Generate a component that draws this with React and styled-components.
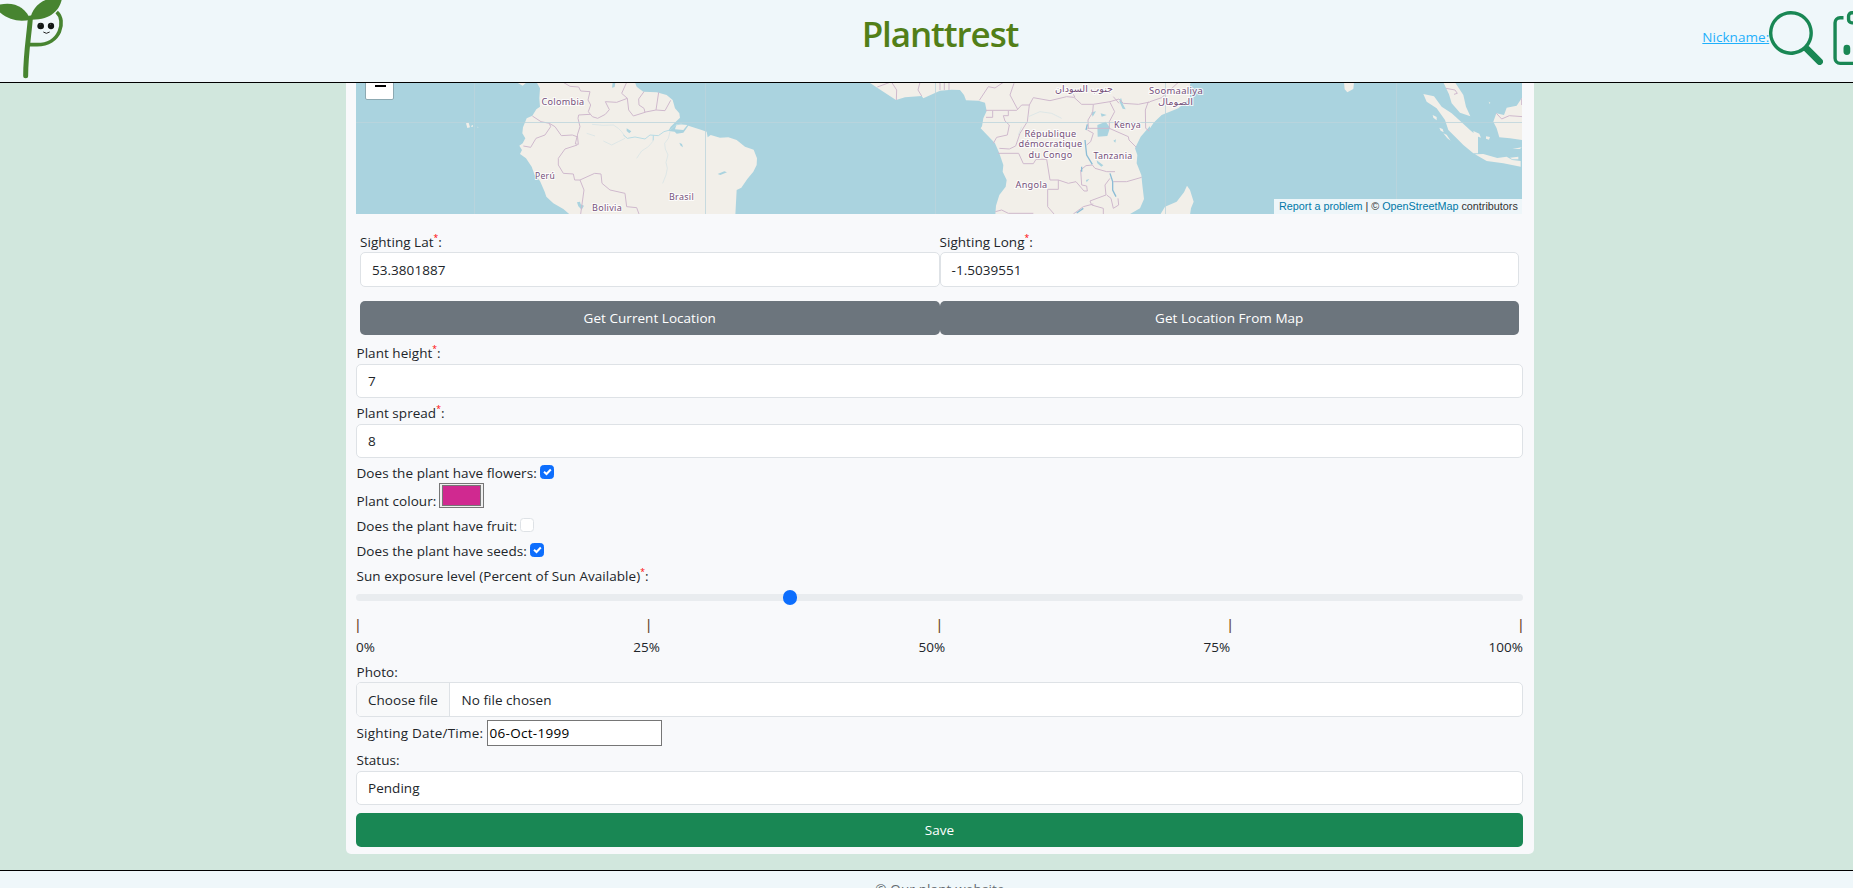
import React from "react";
import styled, { createGlobalStyle } from "styled-components";

const GlobalStyle = createGlobalStyle`
  * { box-sizing: border-box; }
  body {
    margin: 0;
    overflow: hidden;
    background: #d1e7dd;
    color: #212529;
    font-family: "Open Sans", "Noto Sans", sans-serif;
    font-size: 13.5px;
    line-height: 22px;
    letter-spacing: 0.04px;
  }
`;

const Page = styled.div`
  display: flex;
  flex-direction: column;
  width: 1880px;
  height: 888px;
  overflow: hidden;
`;

const Header = styled.header`
  display: grid;
  grid-template-columns: minmax(0, 1fr) auto minmax(0, 1fr);
  flex: none;
  height: 83px;
  background: #eff7fa;
  border-bottom: 1px solid #000;
`;

const Title = styled.h1`
  margin: 0;
  padding-top: 10px;
  font-size: 35px;
  line-height: 48px;
  font-weight: 600;
  letter-spacing: -1.1px;
  color: #527f18;
`;

const Tools = styled.nav`
  display: flex;
  align-items: flex-start;
  padding: 11px 0 0 684px;
  width: 0;
`;

const Nickname = styled.a`
  flex: none;
  width: 67px;
  padding-top: 15px;
  color: #1fb0fb;
  text-decoration: underline;
  white-space: nowrap;
`;

const ToolIcon = styled.svg`
  flex: none;
  width: 54px;
  height: 54px;
  margin-right: 7px;
  fill: #198754;
`;

const Main = styled.main`
  flex: none;
  padding: 0 346px 16px;
`;

const Card = styled.form`
  display: flex;
  flex-direction: column;
  height: 771px;
  padding: 0 11px 7px 10px;
  background: #f8f9fb;
  border-radius: 0 0 5px 5px;
`;

const MapFrame = styled.div`
  position: relative;
  flex: none;
  width: 1166px;
  height: 131px;
  margin-bottom: 17px;
  overflow: hidden;
  background: #aad3df;
`;

const ZoomOut = styled.div`
  position: absolute;
  left: 9px;
  top: -12px;
  width: 29px;
  height: 29px;
  display: flex;
  justify-content: center;
  padding-top: 13px;
  background: #fff;
  border: 1px solid #8ca9b2;
  border-radius: 2px;
`;

const Minus = styled.span`
  width: 11px;
  height: 2px;
  margin-left: 2px;
  background: #000;
`;

const Attribution = styled.div`
  position: absolute;
  right: 0;
  bottom: 0;
  width: 248px;
  height: 15px;
  padding-left: 5px;
  background: rgba(255, 255, 255, 0.8);
  font: 10.8px/15px "Liberation Sans", Arial, sans-serif;
  letter-spacing: 0;
  color: #333;
  white-space: nowrap;
`;

const MapLink = styled.a`
  color: #0078a8;
`;

const Pair = styled.div`
  display: grid;
  grid-template-columns: 1fr 1fr;
  flex: none;
  margin: 0 4px ${(p) => p.$after}px;
`;

const Label = styled.label`
  display: block;
  flex: none;
  height: ${(p) => p.$h || 22}px;
  line-height: ${(p) => (p.$h ? p.$h + 1 : 22)}px;
  margin-top: ${(p) => p.$before || 0}px;
  padding-left: ${(p) => (p.$flush ? 0 : 0.5)}px;
  white-space: nowrap;
`;

const Star = styled.sup`
  color: red;
  font-size: 8.5px;
  line-height: 0;
  vertical-align: 6.5px;
`;

const Field = styled.div`
  display: flex;
  flex: none;
  align-items: center;
  height: ${(p) => p.$h || 34}px;
  padding: 0 11px;
  overflow: hidden;
  background: #fff;
  border: 1px solid #dee2e6;
  border-radius: 5px;
`;

const ChooseFile = styled.span`
  display: flex;
  align-items: center;
  width: 93px;
  height: 100%;
  margin-left: -11px;
  margin-right: 11.5px;
  padding-left: 11px;
  background: #f8f9fa;
  border-right: 1px solid #dee2e6;
`;

const Button = styled.button`
  flex: none;
  height: 34px;
  margin-top: ${(p) => p.$before || 0}px;
  padding: 0;
  border: 0;
  border-radius: 5px;
  background: ${(p) => (p.$primary ? "#198754" : "#6c757d")};
  color: #fff;
  font: inherit;
  letter-spacing: inherit;
`;

const Line = styled.div`
  display: flex;
  flex: none;
  align-items: flex-start;
  height: ${(p) => p.$h || 22}px;
  margin-top: ${(p) => p.$before || 3}px;
`;

const Caption = styled.span`
  flex: none;
  width: ${(p) => p.$w}px;
  padding-top: ${(p) => p.$drop || 0}px;
  padding-left: 0.5px;
  letter-spacing: ${(p) => p.$spacing || 0.06}px;
  white-space: nowrap;
`;

const Check = styled.span`
  display: flex;
  align-items: center;
  justify-content: center;
  width: 14.4px;
  height: 14.4px;
  margin-top: 3px;
  border-radius: 3.5px;
  border: 1px solid ${(p) => (p.$on ? "#0d6efd" : "#dee2e6")};
  background: ${(p) => (p.$on ? "#0d6efd" : "#fff")};
`;

const Swatch = styled.span`
  width: 45px;
  height: 25px;
  padding: 1px 2px;
  border: 1px solid #767676;
  background: #efefef;
  display: flex;
`;

const SwatchColour = styled.span`
  flex: 1;
  background: #d02990;
  border: 1px solid #777;
`;

const Track = styled.div`
  display: flex;
  align-items: center;
  flex: none;
  height: 7px;
  margin-top: 7px;
  padding-left: 426.5px;
  background: #e9ecef;
  border-radius: 4px;
`;

const Thumb = styled.span`
  flex: none;
  width: 14.4px;
  height: 14.4px;
  border-radius: 50%;
  background: #0d6efd;
`;

const Scale = styled.div`
  display: flex;
  flex: none;
  justify-content: space-between;
  height: ${(p) => p.$h}px;
  line-height: ${(p) => p.$h}px;
  margin-top: ${(p) => p.$before}px;
  padding: 0 ${(p) => p.$inset || 0}px;
`;

const Tick = styled.span`
  width: 3px;
  display: flex;
  justify-content: center;
  font-family: "Liberation Sans", Arial, sans-serif;
  font-size: 14.5px;
  color: #6b4a2c;
`;

const DateField = styled.span`
  width: 175px;
  height: 26px;
  padding-left: 1.5px;
  line-height: 24px;
  letter-spacing: 0.3px;
  border: 1px solid #767676;
  background: #fff;
  color: #000;
`;

const Footer = styled.footer`
  flex: 1;
  padding-top: 7px;
  border-top: 1px solid #000;
  background: #eff7fa;
  color: #62696e;
  text-align: center;
  letter-spacing: 0.13px;
`;

const Logo = () => (
  <svg width="100" height="82" viewBox="0 0 300 246" fill="none">
    <path d="M170 36C199 62 182 135 110 134H88" stroke="#478430" strokeWidth="11" />
    <path d="M91 54C88 100 77 160 77 227" stroke="#478430" strokeWidth="15" strokeLinecap="round" />
    <path d="M-10 17C35 0 78 20 91 59C57 67 20 60-10 28Z" fill="#478430" />
    <path d="M90 59C98 18 126-6 187-12C184 18 164 61 90 59Z" fill="#478430" />
    <circle cx="122" cy="78" r="10" fill="#111715" />
    <circle cx="153" cy="78" r="9.5" fill="#111715" />
    <path d="M119 74l3-2M150 74l3-2" stroke="#777" strokeWidth="2" />
    <path d="M130 96Q139 104 149 96" stroke="#222" strokeWidth="3" />
  </svg>
);

const SearchIcon = () => (
  <ToolIcon viewBox="0 0 16 16">
    <path d="M11.742 10.344a6.5 6.5 0 1 0-1.397 1.398h-.001q.044.06.098.115l3.85 3.85a1 1 0 0 0 1.415-1.414l-3.85-3.85a1 1 0 0 0-.115-.1zM12 6.5a5.5 5.5 0 1 1-11 0 5.5 5.5 0 0 1 11 0" />
  </ToolIcon>
);

const ClipboardIcon = () => (
  <ToolIcon viewBox="0 0 16 16">
    <path d="M4 11a1 1 0 1 1 2 0v1a1 1 0 1 1-2 0zm6-4a1 1 0 1 1 2 0v5a1 1 0 1 1-2 0zM7 9a1 1 0 0 1 2 0v3a1 1 0 1 1-2 0z" />
    <path d="M4 1.5H3a2 2 0 0 0-2 2V14a2 2 0 0 0 2 2h10a2 2 0 0 0 2-2V3.5a2 2 0 0 0-2-2h-1v1h1a1 1 0 0 1 1 1V14a1 1 0 0 1-1 1H3a1 1 0 0 1-1-1V3.5a1 1 0 0 1 1-1h1z" />
    <path d="M9.5 1a.5.5 0 0 1 .5.5v1a.5.5 0 0 1-.5.5h-3a.5.5 0 0 1-.5-.5v-1a.5.5 0 0 1 .5-.5zm-3-1A1.5 1.5 0 0 0 5 1.5v1A1.5 1.5 0 0 0 6.5 4h3A1.5 1.5 0 0 0 11 2.5v-1A1.5 1.5 0 0 0 9.5 0z" />
  </ToolIcon>
);

const MapArt = styled.svg`
  display: block;
  .land { fill: #f2efe9; stroke: none; }
  .lake { fill: #aad3df; stroke: none; }
  .border { fill: none; stroke: #cfb9cd; stroke-width: 3; stroke-linejoin: round; }
  .river { fill: none; stroke: #d3e3e5; stroke-width: 2; stroke-linejoin: round; }
  .main-river { fill: none; stroke: #b9dce5; stroke-width: 3; stroke-linejoin: round; }
  .deep { fill: none; stroke: #8cbdd6; stroke-width: 4; }
  .grid { fill: none; stroke: #bcd5dc; stroke-width: 1; }
  text {
    font-family: "Noto Sans", "Open Sans", "DejaVu Sans", sans-serif;
    font-size: 8.8px;
    letter-spacing: 0.3px;
    fill: #75507a;
    stroke: rgba(255, 255, 255, 0.8);
    stroke-width: 2px;
    paint-order: stroke;
    text-anchor: middle;
  }
`;

const places = [
  ["Colombia", 563, 104.5, 43],
  ["Perú", 545, 178.5, 20],
  ["Brasil", 681.5, 200, 25],
  ["Bolivia", 607, 210.5, 30],
  ["République", 1050.5, 136.5, 52],
  ["démocratique", 1050.5, 147, 64],
  ["du Congo", 1050.5, 158, 44],
  ["Kenya", 1127.5, 127.5, 27],
  ["Tanzania", 1113, 158.5, 39],
  ["Angola", 1031.5, 188, 32],
  ["Soomaaliya", 1176, 94, 54],
  ["جنوب السودان", 1084, 92, 58],
  ["الصومال", 1175.5, 105, 35],
];

const WorldMap = () => (
  <MapArt width="1166" height="131" viewBox="356 83 1166 131">
    <g transform="translate(340 75) scale(.33333)">
      <path className="land" d="M590 22L600 40 598 70 600 95 589 103 577 122 560 130 549 157 547 175 556 190 548 205 538 212 546 225 540 237 558 250 575 275 584 300 600 318 614 350 619 365 640 385 670 402 691 420H1186L1190 345 1204 338 1222 312 1240 290 1250 270 1251 250 1241 224 1215 215 1190 195 1165 187 1140 188 1112 180 1103 187 1100 170 1085 165 1045 152 1030 173 1010 176 1004 170 985 168 992 155 1020 128 1018 115 1005 100 998 75 980 60 950 52 910 50 890 35 885 22Z" />
      <path className="land" d="M1010 147L1042 150 1030 165 1005 163ZM530 22H560L548 32ZM378 145l8-2 4 14-8 2zM394 152l5-2v5h-6zM412 155l3 1-1 3z" />
      <path className="lake" d="M818 22h8l-2 14-8 2zM860 160l14 9-6 6-8-7zM1018 203l8 4 3 10-7-5zM711 382l9-2 2 8 10 4-7 12-10-10zM1133 297l20-8 8 3-20 8z" />
      <path className="river" d="M756 148L790 151 820 150 835 160 845 170 855 184M940 182L938 200 925 215 905 228 890 250M990 170L985 190 974 205 976 222 984 240 978 262 982 280 978 300 968 325M855 190L835 200 815 210 790 198M765 183L740 175" />
      <path className="main-river" d="M850 180L862 190 885 186 915 192 930 180 955 182 972 170 990 165 1008 150 1025 146M940 180V196" />
      <path className="border" d="M670 22L690 34 716 36 722 48 750 50 744 75 752 90 745 110 757 125 773 130 796 118 808 104 796 80 830 82 862 70 866 105 880 123 915 112 912 100 897 90 896 72 912 50M750 118L716 120 714 130 720 155 712 180 715 208 706 207 711 185 697 180 664 182 645 155 628 145 603 140 577 123M628 145L632 155 615 180 588 190 572 217 550 213M712 210L675 222 655 250 655 270 670 295 700 297 704 315 720 315 764 295 783 297 786 325 810 345 855 355 860 395 890 398 897 417M720 315L732 345 722 417M860 22L845 55 862 70M956 52L948 105 912 112M948 105L975 107 992 76" />
    </g>
    <g transform="translate(760 75) scale(.33333)">
      <path className="land" d="M327 22L370 50 408 75 435 67 485 63 490 70 540 47 575 44 600 45 612 60 618 76 655 77 675 83 680 108 670 130 666 154 662 160 705 205 718 235 730 270 728 290 740 315 737 335 718 360 708 392 706 420H1105L1140 400 1152 372 1147 330 1144 300 1130 265 1132 240 1125 220 1142 185 1168 155 1205 120 1255 100 1290 70V22Z" />
      <path className="lake" d="M1012 150l25-10 13 18-8 25-29 2zM1022 115l18 5-15 5zM1083 68l6 20 8 15-9-2-10-22zM994 112l14-3-10 16zM1060 197l8-4-2 10zM1010 256l20 15-6 4-12-10zM978 315l10-3-8 10z" />
      <path className="border" d="M390 22L352 36M395 22L410 45 409 75M480 22L474 45 485 63M540 22V45M553 22V45M567 22V45M658 76L685 35 705 39 730 22M762 25L750 60 773 103M678 106H770L785 90 808 90 820 68 870 77 920 65 942 67 965 88 1000 88 1050 80 1077 72 1090 85 1135 88 1200 75 1235 60 1270 22M945 67L940 58M1060 65L1077 85M1165 80L1156 105 1157 160 1168 168M1050 82L1064 110 1048 140 1048 160 982 160M1048 160L1105 185 1107 195 1129 217M678 127H698V107M745 108V122H730L735 138 748 150 742 180 710 187 700 205M808 90L802 140 780 175 767 213 748 222 718 220M714 235H776L790 266H820L828 253H860L870 315H895V343H863V395L882 417M895 315L925 325 948 320 972 348 982 348 980 333 965 330 962 285 978 272 997 270 1005 280 1040 290 1065 290M1060 320H1100L1145 307M1050 310L1035 330 1038 360 990 378 995 390 1030 400V417M1040 360L1053 370 1060 400 1076 390 1074 370M706 410L725 405 745 415H820M982 165L1000 175 992 200 980 210M1000 88L998 112 984 135 985 160M940 417L970 395 1000 387" />
      <path className="deep" d="M975 195L980 240 997 268M1050 295L1058 320 1058 345 1068 365M982 148L978 165M950 414L970 400M965 275V290" />
      <path className="river" d="M785 155L775 180M805 125L840 110 875 115 905 130" />
    </g>
    <g transform="translate(1150 75) scale(.33333)">
      <path className="land" d="M0 22H123C110 55 80 90 45 110L18 133 0 160ZM582 22H612L610 42 592 52 584 43ZM30 420L45 395 80 380 102 352 111 332 120 345 131 380 123 400 120 420Z" />
      <path className="land" d="M820 57L852 64 875 95 905 115 938 145 960 165 984 185V235H970L940 210 920 190 895 165 885 135 860 100 830 80ZM880 22H915L940 60 948 95 961 124 930 113 905 85 897 58ZM975 238L1000 237 1042 249 1070 245 1087 255 1112 258V275L1060 265 1010 258ZM1118 65L1100 92 1070 98 1062 120 1039 115 1030 140 1040 160 1048 187 1080 190 1118 195ZM848 120l12 6v10l-10-8zM868 158l10 4 3 10-9-5zM880 175l10 4 12 18-10-7zM970 168l18 8 5 12-12-4-8 6zM1008 184l12 2-3 8-9-3zM1080 248l25-3v8h-18zM1087 222l28-5-5 5zM1016 80l5 3-2 4z" />
      <path className="border" d="M888 40L915 45 922 55 912 58M1039 115L1055 132 1078 122 1118 125M1115 70V90M0 80L35 68 85 22" />
    </g>
    <path className="grid" d="M356 122.5H1522M474.5 83V214M705.5 83V214M935.5 83V214M1165.5 83V214M1396.5 83V214" opacity=".8" />
    {places.map(([name, x, y, width]) => (
      <text key={name} x={x} y={y} textLength={width} lengthAdjust="spacingAndGlyphs">{name}</text>
    ))}
  </MapArt>
);

const CheckBox = ({ on }) => (
  <Check $on={on}>
    {on && (
      <svg width="9" height="8" viewBox="0 0 9 8" fill="none" stroke="#fff" strokeWidth="2">
        <path d="M1 3.8L3.5 6 7.8 1.5" />
      </svg>
    )}
  </Check>
);

const percents = ["0%", "25%", "50%", "75%", "100%"];

export default function App() {
  return (
    <Page>
      <GlobalStyle />
      <Header>
        <Logo />
        <Title>Planttrest</Title>
        <Tools>
          <Nickname>Nickname:</Nickname>
          <SearchIcon />
          <ClipboardIcon />
        </Tools>
      </Header>
      <Main>
        <Card>
          <MapFrame>
            <WorldMap />
            <ZoomOut><Minus /></ZoomOut>
            <Attribution>
              <MapLink>Report a problem</MapLink> | © <MapLink>OpenStreetMap</MapLink> contributors
            </Attribution>
          </MapFrame>
          <Pair $after={14}>
            <Label $h={21} $flush>Sighting Lat<Star>*</Star>:</Label>
            <Label $h={21} $flush>Sighting Long<Star>*</Star>:</Label>
            <Field $h={35}>53.3801887</Field>
            <Field $h={35}>-1.5039551</Field>
          </Pair>
          <Pair $after={7}>
            <Button type="button">Get Current Location</Button>
            <Button type="button">Get Location From Map</Button>
          </Pair>
          <Label>Plant height<Star>*</Star>:</Label>
          <Field>7</Field>
          <Label $before={4}>Plant spread<Star>*</Star>:</Label>
          <Field>8</Field>
          <Line $before={4}><Caption $w={184}>Does the plant have flowers:</Caption><CheckBox on /></Line>
          <Line $before={-1} $h={29}>
            <Caption $w={83} $drop={7}>Plant colour:</Caption>
            <Swatch><SwatchColour /></Swatch>
          </Line>
          <Line><Caption $w={164}>Does the plant have fruit:</Caption><CheckBox /></Line>
          <Line><Caption $w={174}>Does the plant have seeds:</Caption><CheckBox on /></Line>
          <Label $before={3}>Sun exposure level (Percent of Sun Available)<Star>*</Star>:</Label>
          <Track><Thumb /></Track>
          <Scale $before={15} $h={18} $inset={0.5}>
            {percents.map((p) => <Tick key={p}>|</Tick>)}
          </Scale>
          <Scale $before={2} $h={22}>
            {percents.map((p) => <span key={p}>{p}</span>)}
          </Scale>
          <Label $before={3} $h={21}>Photo:</Label>
          <Field $h={35}><ChooseFile>Choose file</ChooseFile>No file chosen</Field>
          <Line $h={26}>
            <Caption $w={131} $drop={2} $spacing={0.2}>Sighting Date/Time:</Caption>
            <DateField>06-Oct-1999</DateField>
          </Line>
          <Label $before={3}>Status:</Label>
          <Field>Pending</Field>
          <Button type="button" $primary $before={8}>Save</Button>
        </Card>
      </Main>
      <Footer>© Our plant website</Footer>
    </Page>
  );
}
